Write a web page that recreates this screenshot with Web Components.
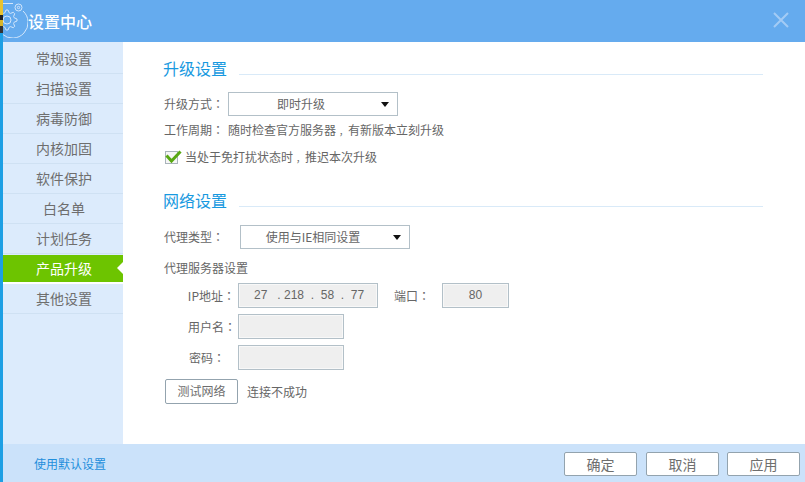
<!DOCTYPE html>
<html>
<head>
<meta charset="utf-8">
<title>设置中心</title>
<style>
  html, body { margin: 0; height: 100%; overflow: hidden; background: #fff; }
  body { font: 13px/18px "Noto Sans CJK SC", "Liberation Sans", sans-serif; color: #666; }
</style>
</head>
<body>
<settings-window>
  <side-nav slot="nav">
    <nav-item>常规设置</nav-item>
    <nav-item>扫描设置</nav-item>
    <nav-item>病毒防御</nav-item>
    <nav-item>内核加固</nav-item>
    <nav-item>软件保护</nav-item>
    <nav-item>白名单</nav-item>
    <nav-item>计划任务</nav-item>
    <nav-item active>产品升级</nav-item>
    <nav-item>其他设置</nav-item>
  </side-nav>

  <upgrade-panel></upgrade-panel>
  <network-panel></network-panel>

  <a-button slot="footer">确定</a-button>
  <a-button slot="footer">取消</a-button>
  <a-button slot="footer">应用</a-button>
</settings-window>

<script>
// outline of the gear in the logo
function gearPath(cx, cy, teeth, inner, outer) {
  let d = '';
  for (let i = 0; i < teeth * 4; i++) {
    const a = (i - 0.5) * Math.PI * 2 / (teeth * 4);
    const r = i % 4 < 2 ? outer : inner;
    d += (i ? 'L' : 'M') + (cx + r * Math.cos(a)).toFixed(1) + ' ' + (cy + r * Math.sin(a)).toFixed(1);
  }
  return d + 'Z';
}

const windowTpl = document.createElement('template');
windowTpl.innerHTML = `
  <style>
    :host { display: grid; grid-template-rows: 42px 402px 38px; height: 482px; width: 805px; position: relative; border-left: 3px solid #1d9fe4; box-sizing: border-box; }
    .corner { position: absolute; left: -3px; top: 0; width: 3px; height: 33px; background: linear-gradient(#e8c22e 0 45%, #222 45% 60%, #d8b52a 60% 80%, #333 80%); }
    header { background: #65abee; display: flex; align-items: center; color: #fff; position: relative; overflow: hidden; }
    header svg.logo { position: absolute; left: -3px; top: 0; }
    header h1 { margin: 0 0 0 25px; font-size: 16px; font-weight: 500; line-height: 41px; }
    header svg.close { margin: 0 16px 3px auto; }
    main { display: grid; grid-template-columns: 120px 1fr; min-height: 0; }
    .nav { background: #dcebfc; padding-top: 2px; }
    .content { padding: 0 42px 0 40px; background: #fff; }
    footer { background: #cbe2fa; display: flex; align-items: center; padding: 2px 5px 0 31px; }
    footer a { color: #1f8fdc; font-size: 12px; }
    footer .btns { margin-left: auto; display: flex; gap: 8px; }
    ::slotted(a-button:first-of-type) { margin-right: 1px; }
  </style>
  <div class="corner"></div>
  <header>
    <svg class="logo" width="28" height="38" viewBox="0 0 28 38" fill="none" stroke="#d3e6fb" stroke-width="1">
      <path d="M1 3.5 H13"/>
      <path d="M23 11 A15.5 15.5 0 0 1 2 34"/>
      <circle cx="18.5" cy="7.5" r="3.5"/><circle cx="18.5" cy="7.5" r="1.2"/>
      <path d="${gearPath(7, 20, 8, 7.5, 10)}"/>
      <circle cx="7" cy="20" r="4"/>
    </svg>
    <h1>设置中心</h1>
    <svg class="close" width="16" height="16" viewBox="0 0 16 16" stroke="#a3cbf5" stroke-width="2"><path d="M1 1 L15 15 M15 1 L1 15"/></svg>
  </header>
  <main>
    <div class="nav"><slot name="nav"></slot></div>
    <div class="content"><slot></slot></div>
  </main>
  <footer>
    <a>使用默认设置</a>
    <div class="btns"><slot name="footer"></slot></div>
  </footer>
`;
class SettingsWindow extends HTMLElement {
  constructor() {
    super();
    this.attachShadow({ mode: 'open' });
    this.shadowRoot.appendChild(windowTpl.content.cloneNode(true));
  }
}
customElements.define('settings-window', SettingsWindow);

class SideNav extends HTMLElement {
  constructor() {
    super();
    this.attachShadow({ mode: 'open' });
    this.shadowRoot.innerHTML = `<style>:host { display: flex; flex-direction: column; }</style><slot></slot>`;
  }
}
customElements.define('side-nav', SideNav);

class NavItem extends HTMLElement {
  constructor() {
    super();
    this.attachShadow({ mode: 'open' });
    this.shadowRoot.innerHTML = `
      <style>
        :host { display: block; height: 30px; box-sizing: border-box; border-bottom: 1px solid #cfe1f3; padding-left: 2px; text-align: center; line-height: 29px; color: #6e6e6e; font-size: 14px; position: relative; }
        :host([active]) { background: #6dc400; color: #fff; border-bottom: 2px solid #fff; border-top: 1px solid #dcebfc; line-height: 26px; }
        :host([active])::after { content: ''; position: absolute; right: 0; top: 7px; border: 6px solid transparent; border-right-color: #fff; border-left-width: 0; }
      </style>
      <slot></slot>`;
  }
}
customElements.define('nav-item', NavItem);

class SectionHead extends HTMLElement {
  constructor() {
    super();
    this.attachShadow({ mode: 'open' });
    this.shadowRoot.innerHTML = `
      <style>
        :host { display: flex; align-items: flex-end; gap: 12px; color: #1799e0; font-size: 16px; line-height: 22px; padding-bottom: 1px; }
        i { flex: 1; border-bottom: 1px solid #d9eaf8; margin-bottom: 4px; }
      </style>
      <slot></slot><i></i>`;
  }
}
customElements.define('section-head', SectionHead);

class DropDown extends HTMLElement {
  constructor() {
    super();
    this.attachShadow({ mode: 'open' });
    this.shadowRoot.innerHTML = `
      <style>
        :host { display: block; width: 170px; height: 24px; box-sizing: border-box; border: 1px solid #b3c0c8; background: #fff; position: relative; text-align: center; line-height: 22px; padding-right: 24px; font-size: 12px; color: #666; }
        :host::after { content: ''; position: absolute; right: 8px; top: 9px; border: 4px solid transparent; border-top: 5px solid #111; border-bottom: 0; }
      </style>
      <slot></slot>`;
  }
}
customElements.define('drop-down', DropDown);

class FieldBox extends HTMLElement {
  constructor() {
    super();
    this.attachShadow({ mode: 'open' });
    this.shadowRoot.innerHTML = `<style>:host { display: block; box-sizing: border-box; width: var(--w, 106px); height: 25px; border: 1px solid #b3c0c8; background: #efefef; box-shadow: inset 0 0 0 1px #f8f8f8; font: 12px/23px "Liberation Sans", "Noto Sans CJK SC", sans-serif; color: #666; text-align: center; white-space: pre; }</style><slot></slot>`;
  }
}
customElements.define('field-box', FieldBox);

class AButton extends HTMLElement {
  constructor() {
    super();
    this.attachShadow({ mode: 'open' });
    this.shadowRoot.innerHTML = `
      <style>
        :host { display: block; box-sizing: border-box; width: 73px; height: 24px; border: 1px solid #93a3ae; border-radius: 2px; background: #fff; text-align: center; line-height: 22px; color: #6e6e6e; font-size: 14px; }
      </style>
      <slot></slot>`;
  }
}
customElements.define('a-button', AButton);

class CheckRow extends HTMLElement {
  constructor() {
    super();
    this.attachShadow({ mode: 'open' });
    this.shadowRoot.innerHTML = `
      <style>
        :host { display: flex; align-items: center; gap: 7px; font-size: 12px; line-height: 18px; }
        .box { width: 13px; height: 13px; box-sizing: border-box; border: 1px solid #a9b4ba; background: #f6f6f6; position: relative; }
        svg { position: absolute; left: -1px; top: -3px; }
      </style>
      <span class="box"><svg width="18" height="16" viewBox="0 0 18 16"><path d="M1.5 6.5 L6.5 12 L15.5 2.5" fill="none" stroke="#58a812" stroke-width="3"/></svg></span>
      <span><slot></slot></span>`;
  }
}
customElements.define('check-row', CheckRow);

const panelCss = `
  .c { font-family: "Noto Sans CJK TC", sans-serif; }
  .p { font-size: 9px; line-height: 1; padding-left: 3px; }
`;

class UpgradePanel extends HTMLElement {
  constructor() {
    super();
    this.attachShadow({ mode: 'open' });
    this.shadowRoot.innerHTML = `
      <style>
        ${panelCss}
        :host { display: block; padding-top: 15px; font-size: 12px; }
        .row { display: flex; align-items: center; gap: 6px; }
        .head { margin-bottom: 12px; }
        .label { width: 58px; white-space: nowrap; }
        .cycle { margin: 5px 0 0 1px; line-height: 18px; }
        .cycle b { font-weight: 400; margin-left: 4px; }
        check-row { margin: 9px 0 0 2px; }
      </style>
      <section-head class="head">升级设置</section-head>
      <div class="row" style="padding-left:1px"><span class="label">升级方式<span class="c">：</span></span><drop-down>即时升级</drop-down></div>
      <div class="cycle">工作周期<span class="c">：</span><b>随时检查官方服务器<span class="p">，</span>有新版本立刻升级</b></div>
      <check-row>当处于免打扰状态时<span class="p">，</span>推迟本次升级</check-row>`;
  }
}
customElements.define('upgrade-panel', UpgradePanel);

class NetworkPanel extends HTMLElement {
  constructor() {
    super();
    this.attachShadow({ mode: 'open' });
    this.shadowRoot.innerHTML = `
      <style>
        ${panelCss}
        :host { display: block; padding-top: 23px; font-size: 12px; }
        .head { margin-bottom: 13px; }
        .proxy { display: flex; align-items: center; padding-left: 1px; }
        .proxy span.l { width: 76px; }
        .title { margin: 10px 0 6px 1px; }
        .row { display: flex; align-items: center; margin-bottom: 6px; }
        .row label { width: 73px; text-align: right; margin-right: 2px; white-space: nowrap; }
        .port { margin: 0 14px 0 16px; width: 34px; white-space: nowrap; }
        .test { display: flex; align-items: center; gap: 9px; margin: 9px 0 0 2px; }
        .test a-button { font-size: 12px; height: 25px; line-height: 22px; }
      </style>
      <section-head class="head">网络设置</section-head>
      <div class="proxy"><span class="l">代理类型<span class="c">：</span></span><drop-down>使用与IE相同设置</drop-down></div>
      <div class="title">代理服务器设置</div>
      <div class="row"><label style="padding-right:1px;width:72px">IP地址<span class="c">：</span></label><field-box style="--w:140px;text-align:left;padding-left:15px">27   . 218  .  58  .  77</field-box><span class="port">端口<span class="c">：</span></span><field-box style="--w:67px">80</field-box></div>
      <div class="row"><label>用户名<span class="c">：</span></label><field-box></field-box></div>
      <div class="row"><label style="padding-right:11px;width:62px">密码<span class="c">：</span></label><field-box></field-box></div>
      <div class="test"><a-button>测试网络</a-button><span>连接不成功</span></div>`;
  }
}
customElements.define('network-panel', NetworkPanel);
</script>
</body>
</html>
